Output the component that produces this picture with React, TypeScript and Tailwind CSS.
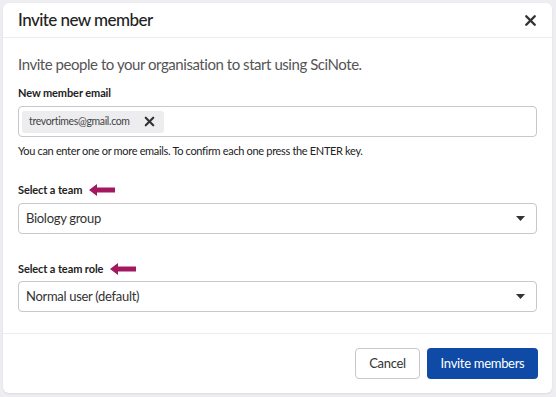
import { X } from 'lucide-react';

function Arrow() {
  return (
    <svg width="26" height="12" viewBox="0 0 26 12" className="ml-[7px]">
      <path d="M0 6 L8 0 L8 3.5 L26 3.5 L26 8.5 L8 8.5 L8 12 Z" fill="#a3195f" />
    </svg>
  );
}

function Caret() {
  return (
    <svg width="9" height="5" viewBox="0 0 9 5">
      <path d="M0 0 L9 0 L4.5 5 Z" fill="#333" />
    </svg>
  );
}

function SelectBox({ value }: { value: string }) {
  return (
    <div className="flex items-center justify-between h-[31px] border border-[#c7c7cc] rounded-[4px] pl-[7px] pr-[11px] bg-white">
      <span className="text-[13px] tracking-[-0.3px] text-[#333]">{value}</span>
      <Caret />
    </div>
  );
}

export default function App() {
  return (
    <div
      className="w-[556px] h-[397px] bg-[#eeeef2] p-[3px]"
      style={{ fontFamily: 'Lato, "Open Sans", sans-serif' }}
    >
      <div className="w-[549px] h-[390px] bg-white rounded-[6px] shadow-[0_1px_2px_rgba(0,0,0,0.08)] flex flex-col">
        {/* Header */}
        <div className="h-[35px] flex items-center justify-between pl-[15px] pr-[13px] border-b border-[#ececef]">
          <h2 className="text-[17px] tracking-[-0.55px] font-medium text-[#222]">Invite new member</h2>
          <X size={17} strokeWidth={3.4} className="text-[#333]" />
        </div>

        {/* Body */}
        <div className="flex-1 px-[15px] pt-[14px] border-b border-[#ececef]">
          <p className="text-[15px] tracking-[-0.45px] leading-[24px] text-[#555]">
            Invite people to your organisation to start using SciNote.
          </p>
          <div className="mt-[9px] text-[11px] tracking-[-0.1px] font-bold text-[#222] leading-[16px]">
            New member email
          </div>
          <div className="mt-[5px] h-[31px] border border-[#c7c7cc] rounded-[4px] flex items-center pl-[3px]">
            <div className="h-[22px] w-[142px] bg-[#ededf0] rounded-[3px] flex items-center pl-[7px] gap-[12px]">
              <span className="text-[10.5px] tracking-[-0.35px] text-[#444]">trevortimes@gmail.com</span>
              <X size={15} strokeWidth={3.4} className="text-[#333]" />
            </div>
          </div>
          <p className="mt-[6px] text-[11px] tracking-[-0.33px] leading-[16px] text-[#222]">
            You can enter one or more emails. To confirm each one press the ENTER key.
          </p>

          <div className="mt-[23px] flex items-center h-[16px]">
            <span className="text-[11px] tracking-[-0.1px] font-bold text-[#222]">Select a team</span>
            <Arrow />
          </div>
          <div className="mt-[5px]">
            <SelectBox value="Biology group" />
          </div>

          <div className="mt-[27px] flex items-center h-[16px]">
            <span className="text-[11px] tracking-[-0.1px] font-bold text-[#222]">Select a team role</span>
            <Arrow />
          </div>
          <div className="mt-[4px]">
            <SelectBox value="Normal user (default)" />
          </div>
        </div>

        {/* Footer */}
        <div className="h-[59px] flex items-center justify-end gap-[7px] pr-[14px]">
          <button className="h-[31px] w-[65px] border border-[#c7c7cc] rounded-[4px] text-[13px] tracking-[-0.3px] text-[#333] bg-white">
            Cancel
          </button>
          <button className="h-[31px] w-[111px] rounded-[4px] text-[13px] tracking-[-0.3px] text-white bg-[#0e4aa6]">
            Invite members
          </button>
        </div>
      </div>
    </div>
  );
}
